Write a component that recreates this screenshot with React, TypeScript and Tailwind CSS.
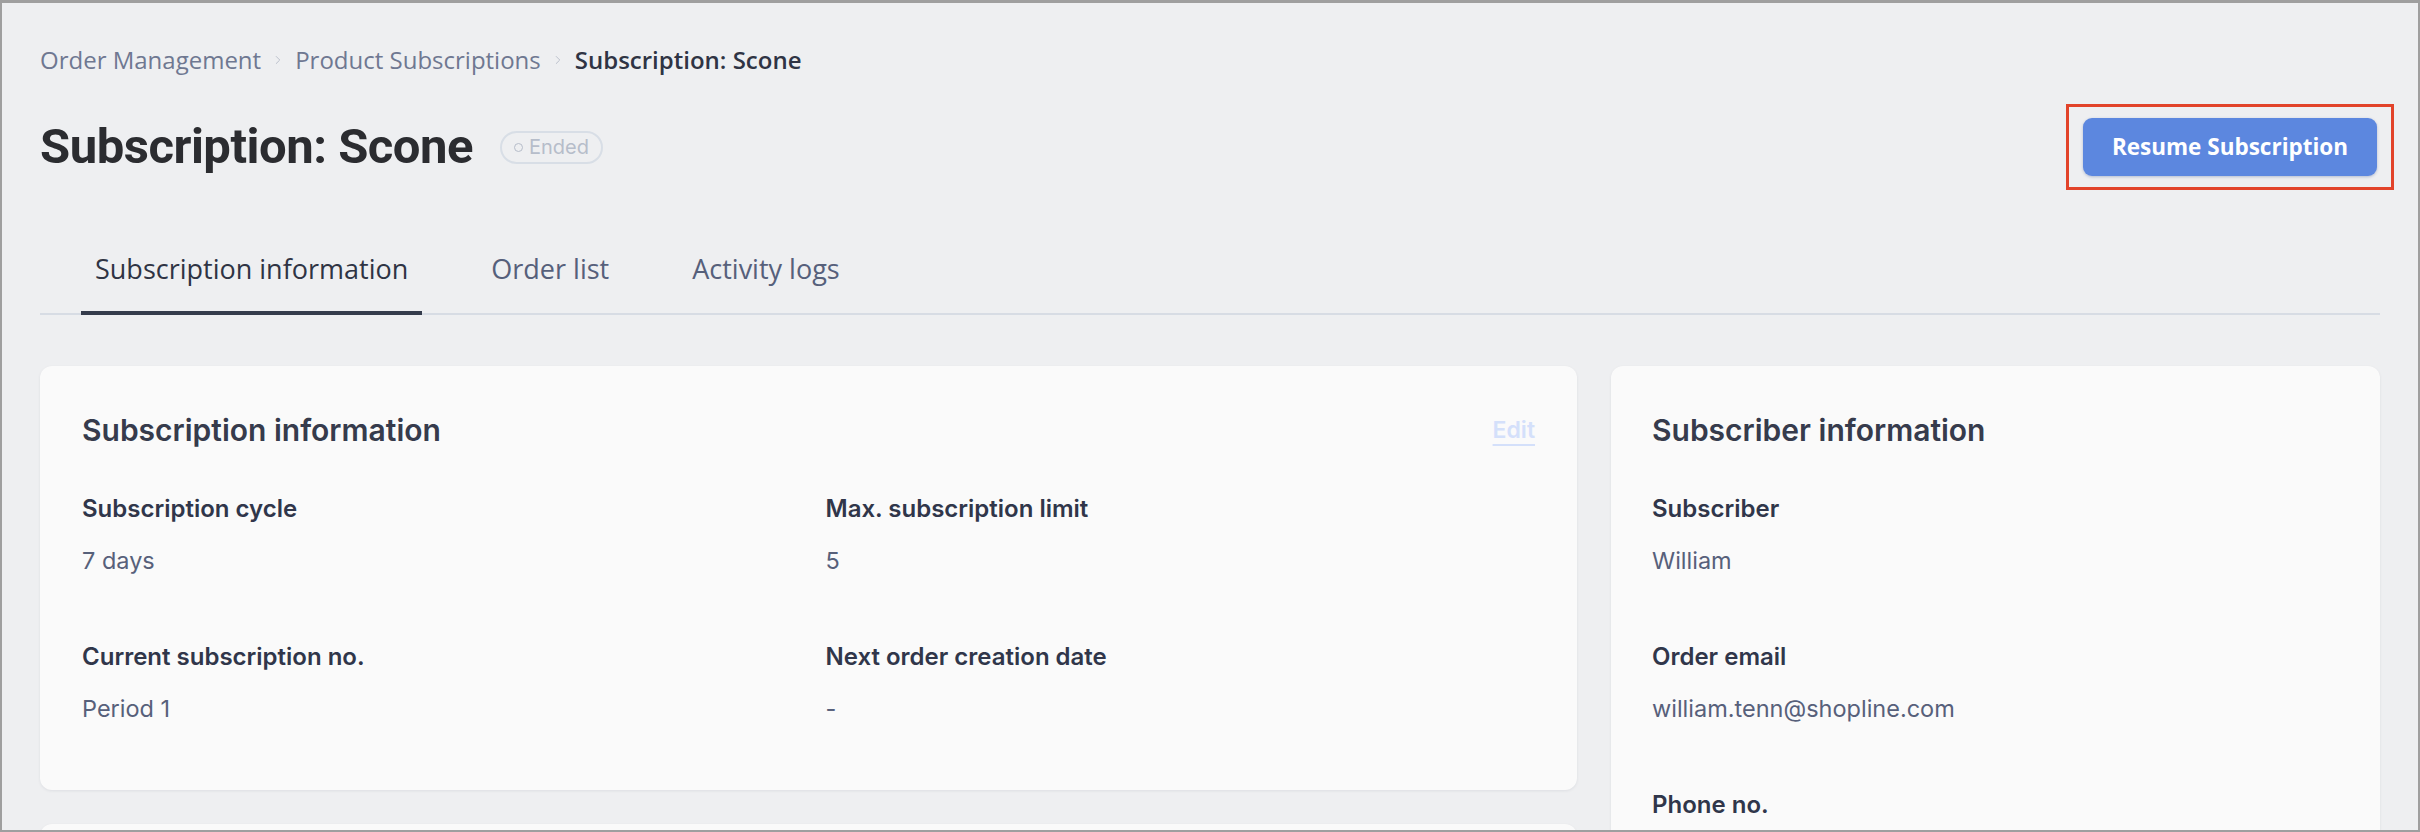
import { ChevronRight } from 'lucide-react'

const SANS = 'font-["Open_Sans",sans-serif]'
const UI = 'font-["Inter",sans-serif]'

const TABS = ['Subscription information', 'Order list', 'Activity logs']

const SUBSCRIPTION_FIELDS = [
  { label: 'Subscription cycle', value: '7 days' },
  { label: 'Max. subscription limit', value: '5' },
  { label: 'Current subscription no.', value: 'Period 1' },
  { label: 'Next order creation date', value: '-' },
]

const SUBSCRIBER_FIELDS = [
  { label: 'Subscriber', value: 'William' },
  { label: 'Order email', value: 'william.tenn@shopline.com' },
  { label: 'Phone no.', value: '-' },
]

function Field({ label, value }: { label: string; value: string }) {
  return (
    <div>
      <p className="text-[24px] font-semibold leading-[30px] text-[#30364a]">{label}</p>
      <p className="mt-[22px] text-[23.5px] leading-[30px] text-[#57607a]">{value}</p>
    </div>
  )
}

function Card({ children, className = '' }: { children?: React.ReactNode; className?: string }) {
  return (
    <div className={`rounded-[12px] bg-[#fafafa] shadow-[0_1px_3px_rgba(30,40,60,0.08)] ${className}`}>
      {children}
    </div>
  )
}

export default function App() {
  return (
    <div className="h-[832px] overflow-hidden border-x-2 border-t-[3px] border-b-2 border-[#9f9f9f] bg-[#eeeff1]">
      <div className={`pl-[38px] pr-[38px] ${UI}`}>
        <nav className={`flex items-center pt-[41px] text-[24px] leading-[32px] ${SANS}`}>
          <span className="text-[#6f7891]">Order Management</span>
          <ChevronRight size={14} strokeWidth={1.5} className="mx-[10px] text-[#b3b9c6]" />
          <span className="text-[#6f7891]">Product Subscriptions</span>
          <ChevronRight size={14} strokeWidth={1.5} className="mx-[10px] text-[#b3b9c6]" />
          <span className="font-semibold text-[#2f3444]">Subscription: Scone</span>
        </nav>

        <div className="mt-[28px] flex items-center justify-between">
          <div className="flex items-center">
            <h1 className='font-["Roboto",sans-serif] text-[49px] font-bold leading-[56px] tracking-[-0.01em] text-[#2b2c30]'>
              Subscription: Scone
            </h1>
            <span className="ml-[27px] flex h-[33px] items-center rounded-full border-2 border-[#d8dee6] px-[12px] text-[20px] text-[#b6bdca]">
              <span className="mr-[6px] h-[9px] w-[9px] rounded-full border-[1.5px] border-[#b6bdca]" />
              Ended
            </span>
          </div>
          <div className="-mr-[14px] border-[3px] border-[#e2432a] px-[14px] py-[11px]">
            <button
              className={`h-[58px] w-[294px] rounded-[9px] bg-[#5c87df] text-[22.5px] font-bold text-white shadow-[0_1px_3px_rgba(40,70,140,0.3)] ${SANS}`}
            >
              Resume Subscription
            </button>
          </div>
        </div>

        <div className={`mt-[59px] flex gap-[55px] border-b-2 border-[#d7dce4] pl-[41px] ${SANS}`}>
          {TABS.map((tab, i) => (
            <div
              key={tab}
              className={`-mb-[2px] border-b-4 px-[14px] pb-[22px] text-[27px] leading-[40px] ${
                i === 0 ? 'border-[#353c4c] text-[#2f3444]' : 'border-transparent text-[#56607b]'
              }`}
            >
              {tab}
            </div>
          ))}
        </div>

        <div className="mt-[51px] grid grid-cols-[1537px_1fr] gap-[34px]">
          <div className="flex flex-col gap-[34px]">
            <Card className="px-[42px] pb-[66px] pt-[46px]">
              <div className="flex items-center justify-between">
                <h2 className="text-[30px] font-semibold leading-[36px] text-[#363b4c]">Subscription information</h2>
                <a className="text-[23px] font-semibold text-[#d4e0fa] underline underline-offset-[6px]">Edit</a>
              </div>
              <div className="mt-[46px] grid grid-cols-2 gap-x-[34px] gap-y-[66px]">
                {SUBSCRIPTION_FIELDS.map((f) => (
                  <Field key={f.label} {...f} />
                ))}
              </div>
            </Card>
            <Card className="h-[200px]" />
          </div>

          <Card className="px-[41px] pb-[69px] pt-[46px]">
            <h2 className="text-[30px] font-semibold leading-[36px] text-[#363b4c]">Subscriber information</h2>
            <div className="mt-[46px] flex flex-col gap-[66px]">
              {SUBSCRIBER_FIELDS.map((f) => (
                <Field key={f.label} {...f} />
              ))}
            </div>
          </Card>
        </div>
      </div>
    </div>
  )
}
